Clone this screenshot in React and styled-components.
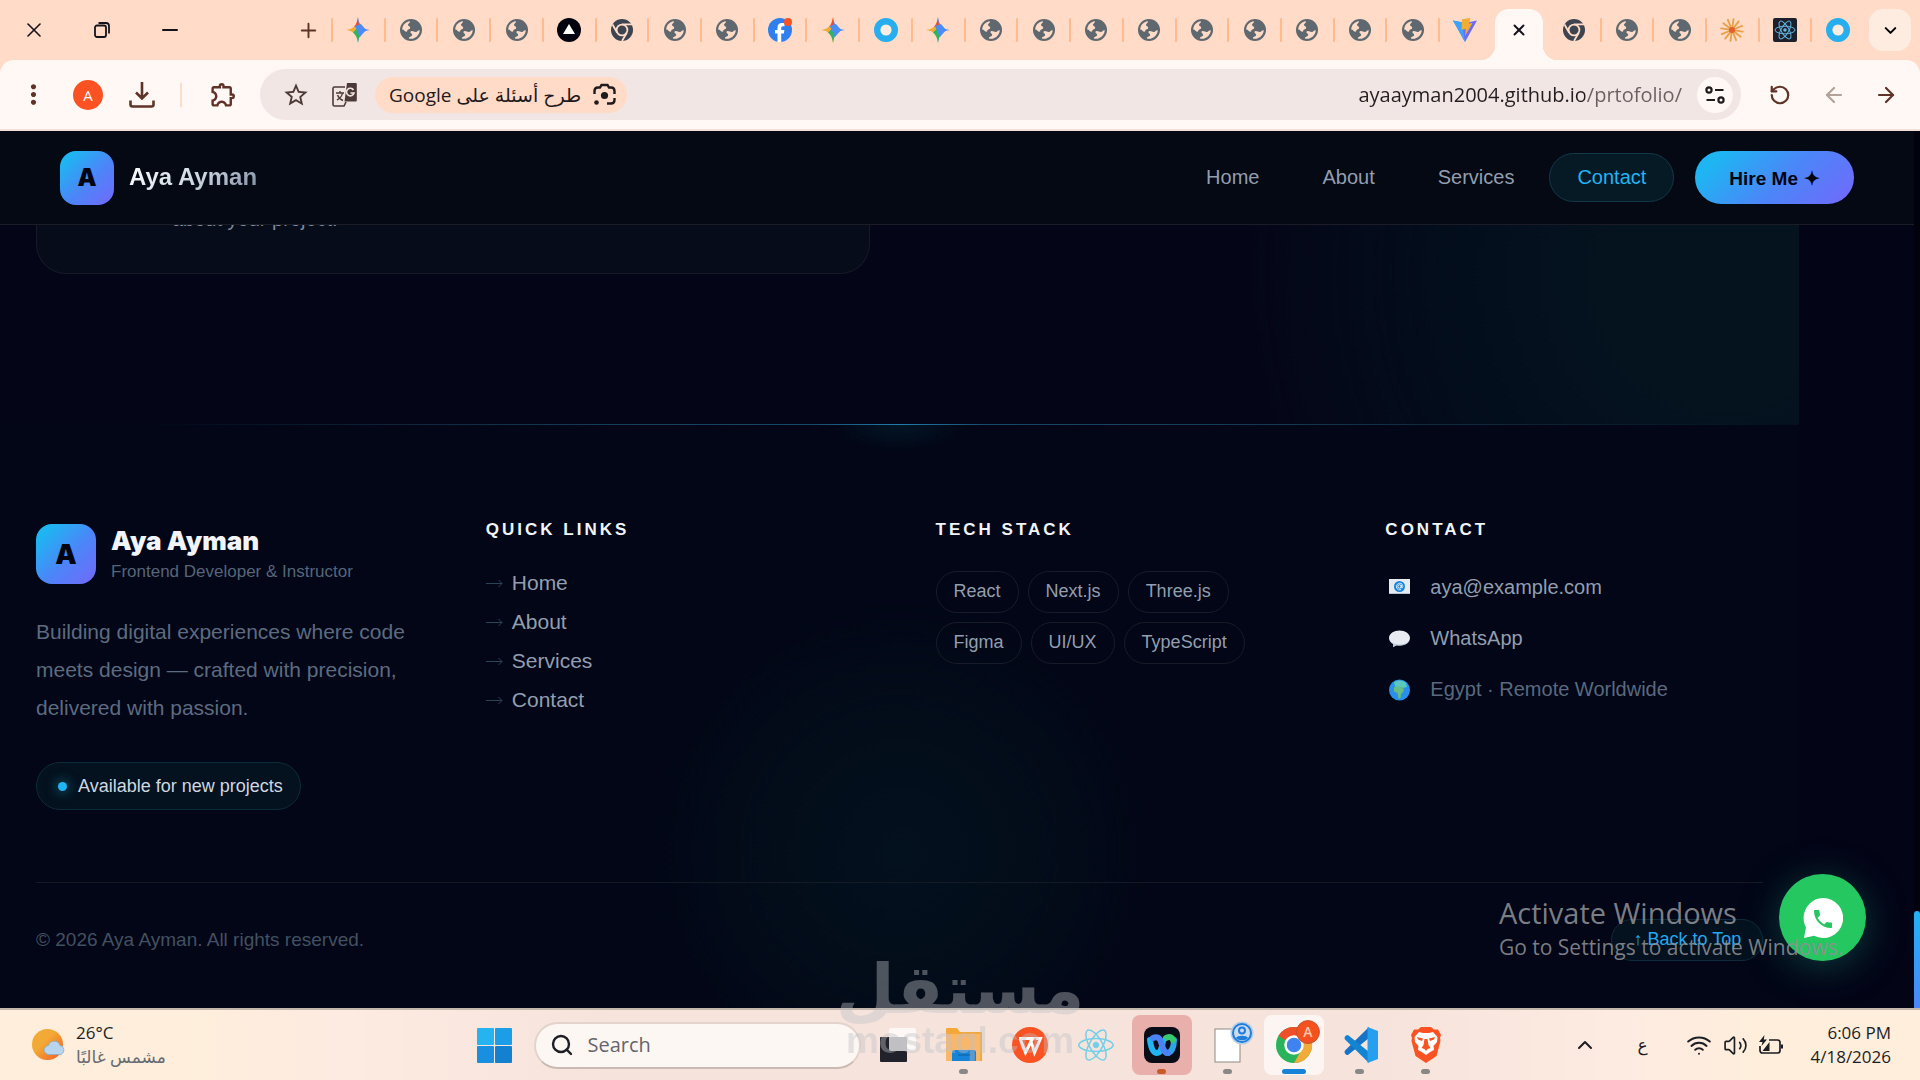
import React from 'react';
import styled, { createGlobalStyle, css } from 'styled-components';
import { X, Minus, Plus, ChevronDown, ChevronUp, ArrowLeft, ArrowRight, RotateCcw, Search, Wifi, Volume2 } from 'lucide-react';
import { MdMoreVert, MdOutlineExtension, MdStarBorder } from 'react-icons/md';
import { FaReact } from 'react-icons/fa';

const GlobalStyle = createGlobalStyle`
  * {
    box-sizing: border-box;
  }

  body {
    margin: 0;
    background: #040519;
    font-family: 'Liberation Sans', Arial, sans-serif;
  }

  h2, p, ul {
    margin: 0;
    padding: 0;
    font-weight: normal;
  }

  ul {
    list-style: none;
  }

  a {
    color: inherit;
    text-decoration: none;
  }

  button, input {
    font: inherit;
    color: inherit;
    margin: 0;
    padding: 0;
    border: 0;
    background: none;
    outline: 0;
  }

  svg {
    display: block;
    flex-shrink: 0;
  }
`;

const systemFont = "'Open Sans', 'DejaVu Sans', sans-serif";
const brandGradient = 'linear-gradient(135deg, #1fb4f2 15%, #4b86f8 55%, #7368fb)';

const Shell = styled.div`
  position: relative;
  height: 100vh;
  display: flex;
  flex-direction: column;
  overflow: hidden;
`;

/* ---------- browser window ---------- */

const Browser = styled.header`
  background: #ffdbc8;
  font-family: ${systemFont};
`;

const TabStrip = styled.div`
  display: flex;
  align-items: center;
  height: 60px;
  padding-right: 9px;
`;

const WindowButton = styled.button`
  width: 68px;
  height: 60px;
  display: flex;
  align-items: center;
  justify-content: center;
  color: #14121a;
`;

const NewTab = styled.button`
  width: 40px;
  height: 40px;
  margin: 0 3px 0 84px;
  display: flex;
  align-items: center;
  justify-content: center;
  color: #5f3327;
`;

const Tabs = styled.nav`
  flex: 1;
  display: flex;
  height: 60px;
`;

const Tab = styled.button`
  flex: 1;
  display: flex;
  align-items: center;

  &::before {
    content: '';
    width: 2px;
    height: 24px;
    border-radius: 1px;
    background: ${({ $first }) => ($first ? 'transparent' : '#ffbb8e')};
  }
`;

const Favicon = styled.span`
  flex: 1;
  display: flex;
  justify-content: center;
`;

const ActiveTab = styled.button`
  position: relative;
  flex: 0 0 48px;
  height: 51px;
  margin: 9px 4px 0;
  display: flex;
  align-items: center;
  justify-content: center;
  padding-bottom: 9px;
  border-radius: 14px 14px 0 0;
  background: #fff8f5;
  color: #14121a;

  &::before,
  &::after {
    content: '';
    position: absolute;
    bottom: 0;
    width: 14px;
    height: 14px;
  }

  &::before {
    right: 100%;
    background: radial-gradient(circle at 0 0, transparent 14px, #fff8f5 14px);
  }

  &::after {
    left: 100%;
    background: radial-gradient(circle at 100% 0, transparent 14px, #fff8f5 14px);
  }
`;

const TabSearch = styled.button`
  width: 42px;
  height: 42px;
  margin-left: 6px;
  display: flex;
  align-items: center;
  justify-content: center;
  border-radius: 14px;
  background: #ffece1;
`;

const Toolbar = styled.div`
  display: flex;
  align-items: center;
  height: 71px;
  padding: 0 9px 0 18px;
  border-bottom: 2px solid #f1e0da;
  border-radius: 14px 14px 0 0;
  background: #fff8f5;
  color: #5f3327;
`;

const ToolButton = styled.button`
  width: ${({ $width }) => $width || 54}px;
  height: 36px;
  display: flex;
  align-items: center;
  justify-content: center;
  color: ${({ $muted }) => ($muted ? '#b3a19a' : 'inherit')};
`;

const Avatar = styled.span`
  width: 30px;
  height: 30px;
  display: flex;
  align-items: center;
  justify-content: center;
  border-radius: 50%;
  background: #fa5222;
  color: #fff;
  font-size: 15px;
`;

const ToolDivider = styled.span`
  width: 2px;
  height: 24px;
  margin: 0 14px 0 24px;
  background: #ffdbc8;
`;

const AddressBar = styled.div`
  flex: 1;
  height: 51px;
  margin: 0 12px 0 10px;
  padding: 0 8px 0 12px;
  display: flex;
  align-items: center;
  border-radius: 26px;
  background: #f1e6e3;
  color: #4c3a38;
`;

const AskGoogle = styled.button`
  display: flex;
  align-items: center;
  gap: 12px;
  height: 36px;
  margin-left: 7px;
  padding: 0 11px 0 14px;
  border-radius: 18px;
  background: #ffdbc8;
  color: #1f1a1c;
  font-size: 19px;
  font-weight: 500;
  white-space: nowrap;
`;

const UrlInput = styled.input`
  flex: 1;
  min-width: 0;
  margin: 0 15px;
  text-align: right;
  font-size: 20px;
  line-height: 30px;
  background: linear-gradient(to left, #6b5f60 97px, #241e22 97px);
  -webkit-background-clip: text;
  background-clip: text;
  color: transparent;
`;

const SiteInfo = styled.button`
  width: 36px;
  height: 36px;
  display: flex;
  align-items: center;
  justify-content: center;
  border-radius: 50%;
  background: #fff8f5;
  color: #1f1a1c;
`;

/* ---------- portfolio page ---------- */

const Viewport = styled.div`
  position: relative;
  flex: 1;
  min-height: 0;
  display: flex;
  background: #030517;
`;

const Site = styled.div`
  flex: 1;
  display: flex;
  flex-direction: column;
  overflow: hidden;
`;

const ScrollTrack = styled.div`
  width: 6px;
  display: flex;
  align-items: flex-end;
  background: #02020e;
`;

const ScrollThumb = styled.div`
  width: 6px;
  height: 97px;
  border-radius: 3px 3px 0 0;
  background: linear-gradient(#22b3f4, #4a86f8);
`;

const NavBar = styled.nav`
  display: flex;
  align-items: center;
  height: 94px;
  padding: 0 60px;
  border-bottom: 1px solid #1b1c25;
  background: #040913;
`;

const Logo = styled.span`
  width: ${({ $size }) => $size}px;
  height: ${({ $size }) => $size}px;
  display: flex;
  align-items: center;
  justify-content: center;
  border-radius: 16px;
  background: ${brandGradient};
  color: #030412;
  font-family: Inter, sans-serif;
  font-size: ${({ $size }) => ($size > 54 ? 27 : 24)}px;
  font-weight: 900;
`;

const NavBrand = styled.a`
  display: flex;
  align-items: center;
  gap: 15px;
  margin-right: auto;
`;

const NavName = styled.span`
  font-size: 24px;
  font-weight: 700;
  line-height: 30px;
  padding-bottom: 2px;
  background: linear-gradient(135deg, #fff, #cbd5e1 55%, #7c8aa0);
  -webkit-background-clip: text;
  background-clip: text;
  color: transparent;
`;

const NavLinks = styled.div`
  display: flex;
  gap: 7px;
  margin-right: 21px;
`;

const NavLink = styled.a`
  height: 49px;
  padding: 0 27px;
  border: 1px solid transparent;
  border-radius: 25px;
  font-size: 20px;
  line-height: 46px;
  color: #929eb0;

  ${({ $active }) => $active && css`
    border-color: #12384a;
    background: #051a25;
    color: #22b3f4;
  `}
`;

const HireButton = styled.button`
  display: flex;
  align-items: center;
  gap: 6px;
  height: 53px;
  padding: 2px 34px 0;
  border-radius: 27px;
  background: ${brandGradient};
  color: #030412;
  font-size: 19px;
  font-weight: 700;
`;

const ContactSection = styled.section`
  width: 94%;
  padding: 0 36px 150px;
  background: radial-gradient(circle 480px at 96% 25%, #05131f 0 24%, #030e1c 55%, #04061700 100%), #040617;
`;

const ContactCard = styled.div`
  width: 834px;
  max-width: 100%;
  padding: 0 0 42px 135px;
  border: 1px solid #171a28;
  border-top: 0;
  border-radius: 0 0 30px 30px;
  background: #060c19;
`;

/* only the last few pixels of this line show under the nav bar */
const CardText = styled.p`
  display: flex;
  align-items: flex-end;
  height: 6px;
  overflow: hidden;
  font-size: 20px;
  line-height: 23px;
  color: #7e8a9c;
`;

const Footer = styled.footer`
  flex: 1;
  width: 94%;
  padding: 95px 36px 0;
  border-top: 1px solid;
  border-image: linear-gradient(to right, transparent 8%, #15405a 35%, #17486a 45%, #1f7cab 50%, #17486a 55%, #15405a 65%, #030f1a) 1;
  background:
    radial-gradient(ellipse 66px 26px at 50% 0, #031626, transparent),
    radial-gradient(circle 250px at 50% 426px, #03101e, #030d1a 50%, #02061600 100%),
    #020616;
`;

const FooterGrid = styled.div`
  display: grid;
  grid-template-columns: repeat(4, 1fr);
  column-gap: 72px;
  padding-bottom: 72px;
`;

const Brand = styled.div`
  display: flex;
  align-items: center;
  gap: 15px;
  height: 68px;
`;

const BrandName = styled.p`
  font-family: Inter, sans-serif;
  font-size: 26px;
  font-weight: 900;
  line-height: 36px;
  color: #f1f5f9;
`;

const BrandRole = styled.p`
  font-size: 17px;
  line-height: 26px;
  color: #56657a;
`;

const About = styled.p`
  margin-top: 25px;
  font-size: 21px;
  line-height: 38px;
  color: #5d6b80;
`;

const Available = styled.p`
  display: inline-flex;
  align-items: center;
  gap: 11px;
  height: 48px;
  margin-top: 35px;
  padding: 0 17px 0 21px;
  border: 1px solid #0c2c3c;
  border-radius: 24px;
  background: #04111e;
  font-size: 18px;
  color: #d0d7e0;

  &::before {
    content: '';
    width: 9px;
    height: 9px;
    border-radius: 50%;
    background: #22b3f4;
    box-shadow: 0 0 12px 2px #0f5468;
  }
`;

const Heading = styled.h2`
  font-size: 17px;
  font-weight: 700;
  line-height: 20px;
  letter-spacing: 3px;
  text-transform: uppercase;
  color: #f1f5f9;
`;

const LinkList = styled.ul`
  margin-top: 23px;
  font-size: 21px;
  line-height: 39px;
`;

const QuickLink = styled.a`
  display: flex;
  align-items: center;
  gap: 9px;
  color: #929eb0;

  svg {
    color: #2a4355;
  }
`;

const ChipList = styled.ul`
  display: flex;
  flex-wrap: wrap;
  gap: 9px;
  margin-top: 31px;
`;

const Chip = styled.li`
  height: 42px;
  padding: 0 17px;
  border: 1px solid #181b28;
  border-radius: 21px;
  font-size: 18px;
  line-height: 39px;
  color: #929eb0;
`;

const ContactList = styled.ul`
  margin-top: 22px;
  font-size: 20px;
  line-height: 51px;
`;

const ContactItem = styled.li`
  display: flex;
  align-items: center;
  gap: 16px;
  color: ${({ $muted }) => ($muted ? '#5a697e' : '#929eb0')};
`;

const FooterBottom = styled.div`
  display: flex;
  align-items: center;
  justify-content: space-between;
  padding-top: 36px;
  border-top: 1px solid #141926;
`;

const Copyright = styled.p`
  font-size: 19px;
  color: #435061;
`;

const BackToTop = styled.a`
  height: 42px;
  padding: 0 21px;
  border: 1px solid #0d2b3c;
  border-radius: 21px;
  background: #04111e;
  font-size: 18px;
  line-height: 39px;
  color: #22a9ee;
`;

const ChatButton = styled.button`
  position: absolute;
  right: 54px;
  bottom: 47px;
  width: 87px;
  height: 87px;
  display: flex;
  align-items: center;
  justify-content: center;
  border-radius: 50%;
  background: #25c760;
  box-shadow: 0 6px 36px #0b3b3c;
`;

/* ---------- overlays ---------- */

const ActivateNotice = styled.div`
  position: absolute;
  right: 77px;
  bottom: 46px;
  font-family: ${systemFont};
  color: #8d8f95e0;
  white-space: nowrap;
  pointer-events: none;
`;

const NoticeTitle = styled.p`
  font-size: 29px;
  line-height: 38px;
`;

const NoticeText = styled.p`
  font-size: 21px;
  line-height: 30px;
`;

const Watermark = styled.div`
  position: absolute;
  left: 50%;
  bottom: 16px;
  transform: translateX(-50%);
  display: flex;
  flex-direction: column;
  align-items: center;
  pointer-events: none;
  opacity: 0.4;
  color: #bfc0c4;
`;

const WatermarkArabic = styled.span`
  font-family: 'DejaVu Sans', sans-serif;
  font-size: 68px;
  font-weight: 700;
  line-height: 56px;
`;

const WatermarkLatin = styled.span`
  font-size: 37px;
  font-weight: 700;
  line-height: 46px;
`;

/* ---------- taskbar ---------- */

const Taskbar = styled.footer`
  display: grid;
  grid-template-columns: 1fr auto 1fr;
  align-items: center;
  height: 72px;
  border-top: 2px solid #c3b6ab;
  background: linear-gradient(to right, #feeedb 10%, #fdeae1 18%, #f6e4dc 32%, #f6e4dc 72%, #fdebe2 84%, #feeedb 92%);
  font-family: ${systemFont};
  font-size: 17px;
  line-height: 24px;
  color: #1d1d24;
`;

const Weather = styled.button`
  display: flex;
  align-items: center;
  gap: 10px;
  padding-left: 32px;
  text-align: left;
`;

const Condition = styled.span`
  display: block;
  color: #686a72;
`;

const Apps = styled.div`
  display: flex;
  align-items: center;
`;

const StartButton = styled.button`
  width: 66px;
  height: 60px;
  display: flex;
  align-items: center;
  justify-content: center;
`;

const SearchBox = styled.label`
  display: flex;
  align-items: center;
  gap: 14px;
  width: 327px;
  height: 47px;
  margin: 0 4px 0 6px;
  padding-left: 14px;
  border: 2px solid #e2d3cc;
  border-bottom-color: #c9bbb4;
  border-radius: 24px;
  background: #fdf7f4;

  input {
    flex: 1;
    min-width: 0;
    font-size: 20px;
  }

  input::placeholder {
    color: #66646a;
    opacity: 1;
  }
`;

const AppButton = styled.button`
  position: relative;
  width: 60px;
  height: 60px;
  margin: 0 3px;
  display: flex;
  align-items: center;
  justify-content: center;
  border-radius: 8px;
  background: ${({ $tile }) => $tile || 'transparent'};

  &::after {
    content: '';
    position: absolute;
    bottom: 1px;
    width: ${({ $wide }) => ($wide ? 24 : 9)}px;
    height: 5px;
    border-radius: 3px;
    background: ${({ $dot }) => $dot || 'transparent'};
  }
`;

const Tray = styled.div`
  display: flex;
  align-items: center;
  justify-content: flex-end;
  gap: 10px;
  padding-right: 29px;
`;

const TrayItem = styled.button`
  width: ${({ $width }) => $width || 26}px;
  display: flex;
  justify-content: center;
`;

const Clock = styled.time`
  margin-left: 16px;
  text-align: right;
`;

/* ---------- icons ---------- */

const Spark = () => (
  <svg width="24" height="26" viewBox="0 0 24 26">
    <path d="M12 0c1 8 4 12 12 13H12z" fill="#4a8df8" />
    <path d="M12 0c-1 8-4 12-12 13h12z" fill="#f2ab37" />
    <path d="M12 0c-1 5-2 8-4 10l6 0c-1-2-2-5-2-10z" fill="#ee4f32" />
    <path d="M0 13c8 1 11 5 12 13V13z" fill="#f2ab37" />
    <path d="M24 13c-8 1-11 5-12 13V13z" fill="#4a8df8" />
    <path d="M12 26c-.5-5-2-8-5-10.500l4-4 3 7c-1 2-1.600 4.500-2 7.500z" fill="#2fb561" />
    <path d="M9 9l6-2 5 6-6 7z" fill="#4a8df8" />
  </svg>
);

const Globe = () => (
  <svg width="22" height="22" viewBox="0 0 22 22">
    <circle cx="11" cy="11" r="11" fill="#5f686e" />
    <path
      d="M2.200 10.500C2.400 6 5.500 2.800 9.800 2.200c.8 1.600-1.800 2-1.800 3.800 0 1.500 2.200 1 2.200 2.800 0 1.600-1.800 1.300-2.600 2.200-.6.700-.2 1.800-1.200 1.800-1.600 0-2.200-2.300-4.200-2.300z"
      fill="#ffdbc8"
    />
    <path
      d="M9 19.600c-.6-1.600 1.600-1.700 2.600-2.600 1.200-1 .4-2.200-.6-2.800-1-.7-.6-2.200.8-2.200 2 0 2.600 1.200 4.200 1 1.600-.2 1.400-2 3.800-1.800-.3 4.800-4.800 9.600-10.800 8.400z"
      fill="#ffdbc8"
    />
  </svg>
);

const Vercel = () => (
  <svg width="24" height="24" viewBox="0 0 24 24">
    <circle cx="12" cy="12" r="12" fill="#02020e" />
    <path d="M12 6l6 10H6z" fill="#fff" />
  </svg>
);

const ChromeMono = () => (
  <svg width="22" height="22" viewBox="0 0 22 22">
    <circle cx="11" cy="11" r="11" fill="#3d4450" />
    <circle cx="11" cy="11" r="5.400" fill="none" stroke="#ffdbc8" strokeWidth="1.800" />
    <path d="M11 5.400h10M6.200 13.800L1.500 5.500M15.800 13.800L11 22" stroke="#ffdbc8" strokeWidth="1.800" />
  </svg>
);

const Facebook = () => (
  <svg width="24" height="24" viewBox="0 0 24 24">
    <circle cx="12" cy="12" r="12" fill="#2f80ee" />
    <path d="M9.500 24v-8.500H7V12h2.500V9.500c0-3 1.700-4.500 4.300-4.500.9 0 1.800.1 2.700.3v3H15c-1.400 0-1.800.8-1.800 1.700v2h3.200l-.5 3.500h-2.700V24z" fill="#fff" />
    <circle cx="20" cy="4" r="4" fill="#fa5222" />
  </svg>
);

const Ring = () => (
  <svg width="24" height="24" viewBox="0 0 24 24">
    <circle cx="12" cy="12" r="8.800" fill="#ffece1" stroke="#27aeee" strokeWidth="6.400" />
  </svg>
);

const Vite = () => (
  <svg width="24" height="24" viewBox="0 0 24 24">
    <path d="M0 2.500L12 24 24 2.500 12 5z" fill="#6a6cf8" />
    <path d="M0 2.500L12 24 9 4.200z" fill="#3ba4f8" />
    <path d="M9 1.200L17.500 0l-1.500 5.500 3.500-.5L12 18l.8-7-4.300.8z" fill="#f3ad33" />
  </svg>
);

const Burst = () => (
  <svg width="24" height="24" viewBox="-12 -12 24 24" stroke="#e9a04a" strokeWidth="1.800" strokeLinecap="round">
    {[0, 30, 60, 90, 120, 150, 180, 210, 240, 270, 300, 330].map(angle => (
      <line key={angle} x1="2" y1="0" x2="11" y2="0" transform={`rotate(${angle + 8})`} />
    ))}
    <circle r="3" fill="#e0602f" stroke="none" />
  </svg>
);

const ReactTile = () => (
  <svg width="24" height="24" viewBox="0 0 24 24" fill="none" stroke="#63b6e0">
    <rect width="24" height="24" rx="2" fill="#1d1f2b" stroke="none" />
    <ellipse cx="12" cy="12" rx="10" ry="3.800" />
    <ellipse cx="12" cy="12" rx="10" ry="3.800" transform="rotate(60 12 12)" />
    <ellipse cx="12" cy="12" rx="10" ry="3.800" transform="rotate(120 12 12)" />
    <circle cx="12" cy="12" r="1.800" fill="#63b6e0" stroke="none" />
  </svg>
);

const DownloadIcon = () => (
  <svg width="26" height="26" viewBox="0 0 26 26" fill="none" stroke="currentColor" strokeWidth="2.600">
    <path d="M13 0v16M7 10.500l6 6 6-6M1.500 18.500v4c0 1 .8 2 2 2h19c1.200 0 2-1 2-2v-4" />
  </svg>
);

const TranslateIcon = () => (
  <svg width="25" height="26" viewBox="0 0 25 26" fill="none" stroke="currentColor">
    <path d="M13 5H2.500C1.500 5 1 5.500 1 6.500v16c0 1 .5 1.500 1.500 1.500h9.500l2-4" strokeWidth="1.600" />
    <path d="M4 11h8M8 9v2M5 18c3-1.500 5-4 5.500-7M5.500 13c1 2.500 3 4.500 5.500 5.500" strokeWidth="1.400" />
    <path d="M15 1h8.500c.8 0 1.300.5 1.300 1.300v16c0 .8-.5 1.300-1.300 1.300H12.500z" fill="currentColor" stroke="none" />
    <path d="M21.500 8a3.800 3.800 0 1 0 .5 3h-3.500" stroke="#f1e6e3" strokeWidth="1.600" />
  </svg>
);

const LensIcon = () => (
  <svg width="23" height="23" viewBox="0 0 23 23" fill="none" stroke="currentColor" strokeWidth="2.400">
    <path d="M1.500 11V8c0-2 1.500-3.500 3.500-3.500h2L8.500 2h6L16 4.500h2c2 0 3.500 1.500 3.500 3.500v3M21.500 15v2c0 2-1.500 3.500-3.500 3.500h-4" />
    <circle cx="11.500" cy="12.500" r="3.600" fill="currentColor" stroke="none" />
    <circle cx="3.500" cy="19.500" r="2.300" fill="currentColor" stroke="none" />
  </svg>
);

const TuneIcon = () => (
  <svg width="20" height="20" viewBox="0 0 20 20" fill="none" stroke="currentColor" strokeWidth="2.200">
    <circle cx="4" cy="5" r="2.600" />
    <path d="M10 5h8.500M1.500 15H10" />
    <circle cx="16" cy="15" r="2.600" />
  </svg>
);

const SmallArrow = () => (
  <svg width="17" height="8" viewBox="0 0 17 8" fill="none" stroke="currentColor">
    <path d="M0 4.500h16M12.500 1L16 4.500 12.500 8" />
  </svg>
);

const MailIcon = () => (
  <svg width="29" height="22" viewBox="0 0 29 22">
    <rect x="4" y="2" width="21" height="15" fill="#e6ebf2" />
    <path d="M4 16h21v1H4z" fill="#b5c3d3" />
    <circle cx="14.500" cy="9.500" r="5.500" fill="#1684d8" />
    <circle cx="14.500" cy="9.500" r="1.700" fill="none" stroke="#fff" />
    <path d="M16.200 8v2.500c1 1 2-.5 1.500-2a3.300 3.300 0 1 0-1.500 4" fill="none" stroke="#fff" strokeWidth=".8" />
  </svg>
);

const SpeechIcon = () => (
  <svg width="29" height="22" viewBox="0 0 29 22">
    <path d="M14.500 2.500C20 2.500 25 5.500 25 10s-5 7.500-10.500 7.500c-1 0-2-.1-2.800-.3L8 19v-3.300C5.500 14.500 4 12.500 4 10c0-4.500 5-7.500 10.500-7.500z" fill="#e9ebf2" />
    <path d="M4.500 12c1 3 5.500 4.500 10 4.500s8-1.500 10-4c-1 3-5.500 5-10 5l-2.800-.3L8 19v-3.300c-2-1-3-2-3.500-3.700z" fill="#bccada" />
  </svg>
);

const EarthIcon = () => (
  <svg width="29" height="22" viewBox="0 0 29 22">
    <circle cx="14.500" cy="11" r="10.500" fill="#2a8fe6" />
    <path d="M9 3.500c4-3 9-2.500 12 .5l1 4-4 1-3-1-3 1-2-2z" fill="#59c9bd" />
    <path d="M9 8l5-1 5 3-1 3-2 2-.5 4-2 1-1-6-3.500-1.500z" fill="#67bd83" />
  </svg>
);

const ChatIcon = () => (
  <svg width="40" height="40" viewBox="0 0 40 40">
    <path d="M20 0a20 20 0 1 1-9 37.800L1 40l2-10.500A20 20 0 0 1 20 0z" fill="#fff" />
    <path
      d="M6.620 10.790c1.440 2.830 3.760 5.140 6.590 6.590l2.200-2.200c.27-.27.67-.36 1.020-.24 1.120.37 2.330.57 3.570.57.55 0 1 .45 1 1V20c0 .55-.45 1-1 1-9.390 0-17-7.610-17-17 0-.55.45-1 1-1h3.500c.55 0 1 .45 1 1 0 1.250.2 2.450.57 3.570.11.35.03.74-.25 1.020z"
      transform="translate(8 9)"
      fill="#25c760"
    />
  </svg>
);

const WeatherIcon = () => (
  <svg width="34" height="32" viewBox="0 0 34 32">
    <defs>
      <linearGradient id="sun" x1="0" y1="0" x2="1" y2="1">
        <stop offset=".4" stopColor="#f3a935" />
        <stop offset="1" stopColor="#f05a25" />
      </linearGradient>
    </defs>
    <circle cx="15.500" cy="15.500" r="15.500" fill="url(#sun)" />
    <path d="M17 25.500a4.500 4.500 0 0 1-.5-9 6 6 0 0 1 11.500 0 4.700 4.700 0 0 1 1 9z" fill="#b8d5ee" stroke="#7eaed6" strokeWidth=".7" />
  </svg>
);

const WindowsIcon = () => (
  <svg width="35" height="35" viewBox="0 0 35 35">
    <rect width="17" height="17" rx="1" fill="#25b4f0" />
    <rect x="18" width="17" height="17" rx="1" fill="#1c9de8" />
    <rect y="18" width="17" height="17" rx="1" fill="#1890df" />
    <rect x="18" y="18" width="17" height="17" rx="1" fill="#1381d0" />
  </svg>
);

const TaskViewIcon = () => (
  <svg width="36" height="36" viewBox="0 0 36 36">
    <rect y="10" width="27" height="25" rx="1" fill="#22222c" />
    <rect x="9" y="1" width="27" height="23" rx="2" fill="#fff" opacity=".72" />
  </svg>
);

const FolderIcon = () => (
  <svg width="36" height="34" viewBox="0 0 36 34">
    <path d="M1 0h10l3 4h21a1 1 0 0 1 1 1v28H0V1a1 1 0 0 1 1-1z" fill="#f2a93a" />
    <path d="M0 6h34v27H0z" fill="#fbb768" />
    <path d="M6 33V24c0-1 1-2 2-2h20c1 0 2 1 2 2v9z" fill="#1683d6" />
    <path d="M12 26.500h13v1H12z" fill="#0e5c9c" />
  </svg>
);

const WpsIcon = () => (
  <svg width="36" height="36" viewBox="0 0 36 36">
    <circle cx="18" cy="18" r="18" fill="#fa5222" />
    <path d="M7 11.500h14l-3 4M8 11.500l5.500 14 5.500-11 3.500 11 6-14h-5" fill="none" stroke="#fff" strokeWidth="3" />
  </svg>
);

const WebexIcon = () => (
  <svg width="36" height="36" viewBox="0 0 36 36" fill="none" strokeWidth="6" strokeLinecap="round">
    <rect width="36" height="36" rx="8" fill="#0a0d18" />
    <path d="M30 13c0 8-3 13-7 13" stroke="#2ba5e8" />
    <path d="M22 11c3-2 6-1 7 2" stroke="#37c76c" />
    <path d="M6 13c1 8 3 13 7 13 4 0 5-6 6-12" stroke="#23b3f0" />
    <path d="M9 11c4-2 7 0 8 4 2 7 3 11 7 11" stroke="#4a82f6" />
  </svg>
);

const DocIcon = () => (
  <svg width="53" height="51" viewBox="-13 0 53 51">
    <rect x="1" y="9" width="25" height="33" fill="#fff" stroke="#8d8784" />
    <circle cx="28" cy="13" r="11.500" fill="#b8cfe4" />
    <circle cx="28" cy="13" r="9" fill="#c9dcef" stroke="#1f7ddb" strokeWidth="2" />
    <circle cx="28" cy="10.500" r="3" fill="none" stroke="#1f7ddb" strokeWidth="2" />
    <path d="M22 18c1-3 11-3 12 0-2 3-10 3-12 0z" fill="#1f7ddb" />
  </svg>
);

const ChromeIcon = () => (
  <svg width="52" height="50" viewBox="-8 3 52 50">
    <circle cx="18" cy="28" r="18" fill="#29b35a" />
    <path d="M18 28L2.400 19a18 18 0 0 1 31.200 0z" fill="#ee4f28" />
    <path d="M18 28l15.600-9A18 18 0 0 1 18 46l8-14z" fill="#f2ab37" />
    <circle cx="18" cy="28" r="8.500" fill="#3f83f0" stroke="#fff" strokeWidth="2.500" />
    <circle cx="32" cy="15" r="11.500" fill="#f4511e" stroke="#b6542f" strokeWidth=".8" />
    <text x="32" y="20" textAnchor="middle" fontSize="14" fontWeight="600" fill="#ffc7a8">A</text>
  </svg>
);

const CodeIcon = () => (
  <svg width="36" height="36" viewBox="0 0 36 36">
    <path d="M27 0L3 23.500a2.500 2.500 0 0 0 0 3l1 .9c.8.7 1.800.7 2.600 0L27 11z" fill="#1673c6" />
    <path d="M27 36L3 12.500a2.500 2.500 0 0 1 0-3l1-.9c.8-.7 1.800-.7 2.600 0L27 25z" fill="#1384d2" />
    <path d="M25.500 0L36 4v28l-10.500 4z" fill="#259fee" />
  </svg>
);

const BraveIcon = () => (
  <svg width="30" height="36" viewBox="0 0 30 36">
    <path d="M10 0h10l3 2.500h4L30 8l-1 3 .5 3-4 15L15 36 4.500 29 .5 14l.5-3L0 8l3-5.500h4z" fill="#fa5222" />
    <path d="M8 5l4 1h6l4-1 4.500 5-.5 5-3.500 4 .5 4-3 1.500L15 28l-5-3.500L7 23l.5-4L4 15l-.5-5z" fill="#fff" />
    <path d="M6 10l6 1.500-1 2.500-4-1.500zM24 10l-6 1.500 1 2.500 4-1.500zM13.500 12h3l1 6 2 3-3 1-1.500 2-1.500-2-3-1 2-3z" fill="#fa5222" />
  </svg>
);

const BatteryIcon = () => (
  <svg width="25" height="21" viewBox="0 0 25 21" fill="none" stroke="currentColor" strokeWidth="1.700">
    <path d="M10 5h8.500c1.400 0 2.500 1 2.500 2.500v8c0 1.500-1 2.500-2.500 2.500h-15C2 18 1 17 1 15.500V11" />
    <path d="M22 9.500v4h2v-4zM3.500 16l7-9v9z" fill="currentColor" stroke="none" />
    <path d="M5.500 0L0 7h3.500L2.500 11 8 4.500H4.800z" fill="currentColor" stroke="none" />
  </svg>
);

/* ---------- data ---------- */

const tabIcons = {
  spark: Spark,
  globe: Globe,
  vercel: Vercel,
  chrome: ChromeMono,
  facebook: Facebook,
  ring: Ring,
  vite: Vite,
  burst: Burst,
  react: ReactTile,
};

const tabsBefore = [
  'spark', 'globe', 'globe', 'globe', 'vercel', 'chrome', 'globe', 'globe', 'facebook', 'spark', 'ring',
  'spark', 'globe', 'globe', 'globe', 'globe', 'globe', 'globe', 'globe', 'globe', 'globe', 'vite',
];
const tabsAfter = ['chrome', 'globe', 'globe', 'burst', 'react', 'ring'];

const pages = ['Home', 'About', 'Services', 'Contact'];
const stack = ['React', 'Next.js', 'Three.js', 'Figma', 'UI/UX', 'TypeScript'];

const apps = [
  { name: 'Task view', icon: <TaskViewIcon /> },
  { name: 'File Explorer', icon: <FolderIcon />, dot: '#8a8887' },
  { name: 'WPS Office', icon: <WpsIcon /> },
  { name: 'React', icon: <FaReact size={36} color="#74cfe8" /> },
  { name: 'Webex', icon: <WebexIcon />, dot: '#c85c28', tile: '#e9b0ab' },
  { name: 'Document', icon: <DocIcon />, dot: '#8a8887' },
  { name: 'Chrome', icon: <ChromeIcon />, dot: '#1683d6', tile: '#fcf5f2', wide: true },
  { name: 'Visual Studio Code', icon: <CodeIcon />, dot: '#8a8887' },
  { name: 'Brave', icon: <BraveIcon />, dot: '#8a8887' },
];

function renderTab(type, index, noSeparator) {
  const Icon = tabIcons[type];

  return (
    <Tab key={index} $first={noSeparator} aria-label={type + ' tab'}>
      <Favicon><Icon /></Favicon>
    </Tab>
  );
}

function BrowserBar() {
  return (
    <Browser>
      <TabStrip>
        <WindowButton aria-label="Close"><X size={24} strokeWidth={1.6} /></WindowButton>
        <WindowButton aria-label="Restore">
          <svg width="16" height="16" viewBox="0 0 16 16" fill="none" stroke="currentColor" strokeWidth="1.800">
            <rect x="1" y="3.500" width="11" height="11.500" rx="2" />
            <path d="M4.500 1h7.500a3 3 0 0 1 3 3v7.500" />
          </svg>
        </WindowButton>
        <WindowButton aria-label="Minimize"><Minus size={24} strokeWidth={2} /></WindowButton>
        <NewTab aria-label="New tab"><Plus size={23} strokeWidth={2} /></NewTab>
        <Tabs>
          {tabsBefore.map((type, index) => renderTab(type, index, false))}
          <ActiveTab aria-label="Close tab"><X size={18} strokeWidth={2.6} /></ActiveTab>
          {tabsAfter.map((type, index) => renderTab(type, index, index === 0))}
        </Tabs>
        <TabSearch aria-label="Search tabs"><ChevronDown size={19} strokeWidth={2.6} /></TabSearch>
      </TabStrip>
      <Toolbar>
        <ToolButton $width={30} aria-label="Menu"><MdMoreVert size={31} /></ToolButton>
        <ToolButton $width={80} aria-label="Profile"><Avatar>A</Avatar></ToolButton>
        <ToolButton $width={28} aria-label="Downloads"><DownloadIcon /></ToolButton>
        <ToolDivider />
        <ToolButton aria-label="Extensions"><MdOutlineExtension size={29} /></ToolButton>
        <AddressBar>
          <ToolButton $width={48} aria-label="Bookmark"><MdStarBorder size={28} /></ToolButton>
          <ToolButton $width={48} aria-label="Translate"><TranslateIcon /></ToolButton>
          <AskGoogle dir="ltr">
            <span dir="rtl">طرح أسئلة على Google</span>
            <LensIcon />
          </AskGoogle>
          <UrlInput aria-label="Address" defaultValue="ayaayman2004.github.io/prtofolio/" />
          <SiteInfo aria-label="Site information"><TuneIcon /></SiteInfo>
        </AddressBar>
        <ToolButton aria-label="Reload"><RotateCcw size={22} strokeWidth={2.4} /></ToolButton>
        <ToolButton $muted aria-label="Forward"><ArrowLeft size={24} strokeWidth={2.2} /></ToolButton>
        <ToolButton $width={50} aria-label="Back"><ArrowRight size={24} strokeWidth={2.2} /></ToolButton>
      </Toolbar>
    </Browser>
  );
}

function SiteFooter() {
  return (
    <Footer>
      <FooterGrid>
        <div>
          <Brand>
            <Logo $size={60}>A</Logo>
            <div>
              <BrandName>Aya Ayman</BrandName>
              <BrandRole>Frontend Developer &amp; Instructor</BrandRole>
            </div>
          </Brand>
          <About>Building digital experiences where code meets design — crafted with precision, delivered with passion.</About>
          <Available>Available for new projects</Available>
        </div>
        <div>
          <Heading>Quick Links</Heading>
          <LinkList>
            {pages.map(page => (
              <li key={page}>
                <QuickLink href={'#' + page.toLowerCase()}><SmallArrow />{page}</QuickLink>
              </li>
            ))}
          </LinkList>
        </div>
        <div>
          <Heading>Tech Stack</Heading>
          <ChipList>
            {stack.map(item => <Chip key={item}>{item}</Chip>)}
          </ChipList>
        </div>
        <div>
          <Heading>Contact</Heading>
          <ContactList>
            <ContactItem><MailIcon /><a href="mailto:aya@example.com">aya@example.com</a></ContactItem>
            <ContactItem><SpeechIcon /><a href="#whatsapp">WhatsApp</a></ContactItem>
            <ContactItem $muted><EarthIcon />Egypt · Remote Worldwide</ContactItem>
          </ContactList>
        </div>
      </FooterGrid>
      <FooterBottom>
        <Copyright>© 2026 Aya Ayman. All rights reserved.</Copyright>
        <BackToTop href="#top">↑ Back to Top</BackToTop>
      </FooterBottom>
    </Footer>
  );
}

function DesktopBar() {
  return (
    <Taskbar>
      <Weather>
        <WeatherIcon />
        <span>
          26°C
          <Condition dir="rtl">مشمس غالبًا</Condition>
        </span>
      </Weather>
      <Apps>
        <StartButton aria-label="Start"><WindowsIcon /></StartButton>
        <SearchBox>
          <Search size={24} strokeWidth={2.4} />
          <input type="text" placeholder="Search" aria-label="Search" />
        </SearchBox>
        {apps.map(app => (
          <AppButton key={app.name} $tile={app.tile} $dot={app.dot} $wide={app.wide} aria-label={app.name}>
            {app.icon}
          </AppButton>
        ))}
      </Apps>
      <Tray>
        <TrayItem aria-label="Hidden icons"><ChevronUp size={24} strokeWidth={2} /></TrayItem>
        <TrayItem $width={68} aria-label="Keyboard language">ع</TrayItem>
        <TrayItem aria-label="Network"><Wifi size={26} strokeWidth={1.8} /></TrayItem>
        <TrayItem aria-label="Volume"><Volume2 size={25} strokeWidth={1.6} /></TrayItem>
        <TrayItem aria-label="Battery"><BatteryIcon /></TrayItem>
        <Clock>6:06 PM<br />4/18/2026</Clock>
      </Tray>
    </Taskbar>
  );
}

function App() {
  return (
    <>
      <GlobalStyle />
      <Shell>
        <BrowserBar />
        <Viewport>
          <Site>
            <NavBar>
              <NavBrand href="#home">
                <Logo $size={54}>A</Logo>
                <NavName>Aya Ayman</NavName>
              </NavBrand>
              <NavLinks>
                {pages.map(page => (
                  <NavLink key={page} href={'#' + page.toLowerCase()} $active={page === 'Contact'}>{page}</NavLink>
                ))}
              </NavLinks>
              <HireButton>Hire Me <span>✦</span></HireButton>
            </NavBar>
            <ContactSection>
              <ContactCard>
                <CardText>about your project.</CardText>
              </ContactCard>
            </ContactSection>
            <SiteFooter />
          </Site>
          <ScrollTrack><ScrollThumb /></ScrollTrack>
          <ChatButton aria-label="Chat on WhatsApp"><ChatIcon /></ChatButton>
          <ActivateNotice>
            <NoticeTitle>Activate Windows</NoticeTitle>
            <NoticeText>Go to Settings to activate Windows.</NoticeText>
          </ActivateNotice>
        </Viewport>
        <DesktopBar />
        <Watermark>
          <WatermarkArabic>مستقل</WatermarkArabic>
          <WatermarkLatin>mostaql.com</WatermarkLatin>
        </Watermark>
      </Shell>
    </>
  );
}

export default App;
